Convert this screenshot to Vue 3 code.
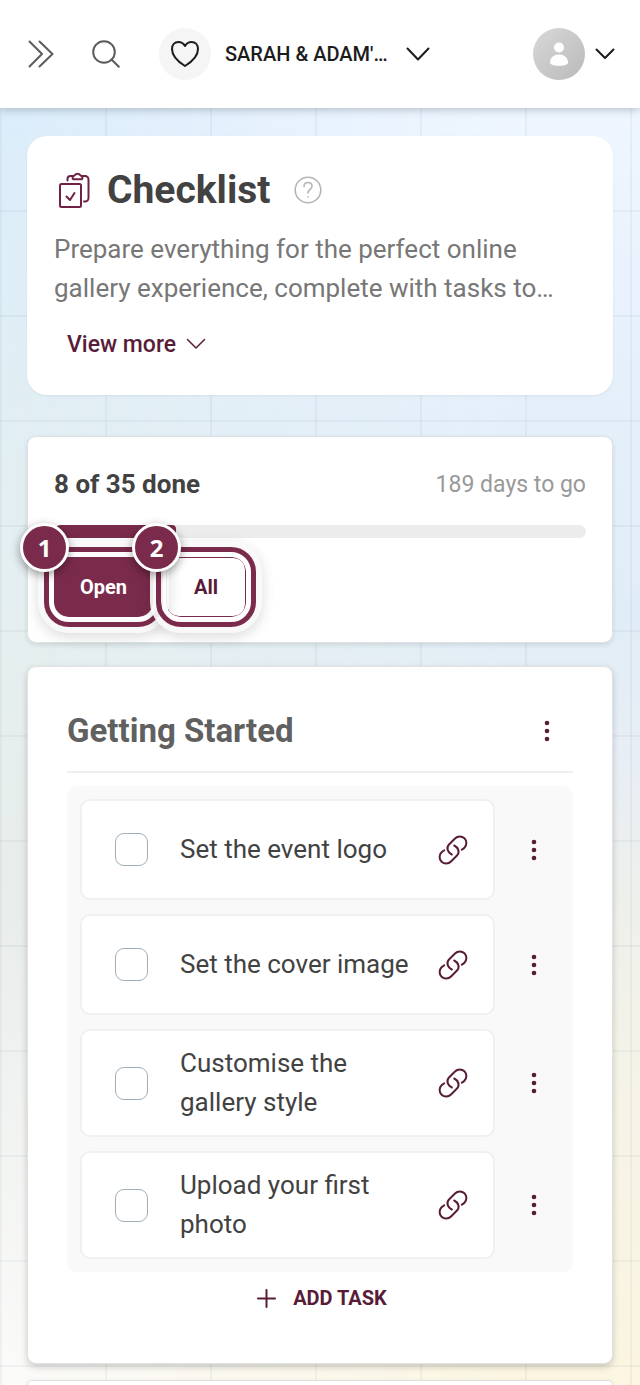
<script setup>
import { ref, computed } from 'vue'

const done = ref(8)
const total = ref(35)
const daysLeft = ref(189)
const filter = ref('open')

const tasks = ref([
  { id: 1, title: 'Set the event logo', checked: false },
  { id: 2, title: 'Set the cover image', checked: false },
  { id: 3, title: 'Customise the gallery style', checked: false },
  { id: 4, title: 'Upload your first photo', checked: false }
])

const filters = [
  { key: 'open', label: 'Open', step: 1 },
  { key: 'all', label: 'All', step: 2 }
]

const progress = computed(() => `${(done.value / total.value) * 100}%`)
</script>

<template>
  <div class="page">
    <header class="topbar">
      <button class="plain" type="button" aria-label="Open menu">
        <svg class="grey" width="26" height="28" viewBox="0 0 26 28">
          <path d="M1.500 1.500 14 14 1.500 26.500M11.500 1.500 24.500 14 11.500 26.500"/>
        </svg>
      </button>
      <button class="plain search" type="button" aria-label="Search">
        <svg class="grey" width="28" height="28" viewBox="0 0 28 28">
          <circle cx="12" cy="12" r="10.800"/>
          <path d="m19.500 19.500 7.300 7.300"/>
        </svg>
      </button>
      <button class="plain event" type="button">
        <span class="event-icon">
          <svg width="28" height="26" viewBox="0 0 28 26">
            <path d="M14 5C12 1.500 9.500 1 7.500 1 3.500 1 1 4 1 8c0 7 6.500 13 13 17 6.500-4 13-10 13-17 0-4-2.500-7-6.500-7-2 0-4.500.5-6.500 4z"/>
          </svg>
        </span>
        <span class="event-name">SARAH &amp; ADAM'…</span>
        <svg width="24" height="14" viewBox="0 0 24 14"><path d="m1.500 1.500 10.500 11 10.500-11"/></svg>
      </button>
      <button class="plain account" type="button" aria-label="Account">
        <span class="avatar">
          <svg width="20" height="25" viewBox="0 0 20 25">
            <circle cx="10" cy="5.500" r="5"/>
            <path d="M1 20.500C1 15.500 5 12.500 10 12.500s9 3 9 8c0 1.800-3 3.300-9 3.300s-9-1.500-9-3.300z"/>
          </svg>
        </span>
        <svg width="20" height="12" viewBox="0 0 20 12"><path d="m1.500 1.500 8.500 8.500 8.500-8.500"/></svg>
      </button>
    </header>

    <main class="content">
      <section class="card intro">
        <div class="intro-title">
          <svg class="clipboard" width="32" height="36" viewBox="0 0 32 36">
            <rect x="2" y="12" width="21" height="23" rx="1.500"/>
            <path d="m8.500 24.500 3.500 3.500 4.500-7"/>
            <path d="M9.500 8.500V7a3 3 0 0 1 3-3H15M24 4h3a3.500 3.500 0 0 1 3.500 3.500V26a3.500 3.500 0 0 1-3.500 3.500h-1"/>
            <path d="M14.500 6C14.500 4 16 3.600 17 3c.8-1.800 4.200-1.800 5 0 1 .6 2.500 1 2.500 3 0 .8-.5 1.300-1.200 1.300h-7.600c-.7 0-1.200-.5-1.200-1.300z"/>
          </svg>
          <h1>Checklist</h1>
          <button class="plain help" type="button" aria-label="Help">
            <svg width="28" height="28" viewBox="0 0 28 28">
              <circle cx="14" cy="14" r="12.800"/>
              <path d="M10 10.500c0-2.500 1.700-4 4-4s4 1.500 4 3.800c0 3.200-4 3.200-4 6.700M14 20.700v.3"/>
            </svg>
          </button>
        </div>
        <p>Prepare everything for the perfect online gallery experience, complete with tasks to…</p>
        <button class="plain more" type="button">
          View more
          <svg width="20" height="12" viewBox="0 0 20 12"><path d="m1.500 1.500 8.500 8.500 8.500-8.500"/></svg>
        </button>
      </section>

      <section class="card status">
        <div class="status-row">
          <strong>{{ done }} of {{ total }} done</strong>
          <span>{{ daysLeft }} days to go</span>
        </div>
        <div class="bar">
          <div class="bar-fill" :style="{ width: progress }"></div>
        </div>
        <div class="filters">
          <div v-for="item in filters" :key="item.key" class="filter">
            <button
                type="button"
                :class="{ active: filter === item.key }"
                @click="filter = item.key"
            >
              {{ item.label }}
            </button>
            <span class="ring"></span>
            <span class="badge">{{ item.step }}</span>
          </div>
        </div>
      </section>

      <section class="card group">
        <div class="group-head">
          <h2>Getting Started</h2>
          <button class="plain dots" type="button" aria-label="Group options">
            <svg width="6" height="22" viewBox="0 0 6 22">
              <circle cx="3" cy="3" r="2.300"/><circle cx="3" cy="11" r="2.300"/><circle cx="3" cy="19" r="2.300"/>
            </svg>
          </button>
        </div>
        <ul class="tasks">
          <li v-for="task in tasks" :key="task.id">
            <div class="task">
              <input :id="`task-${task.id}`" v-model="task.checked" type="checkbox">
              <label :for="`task-${task.id}`">{{ task.title }}</label>
              <a href="#" :aria-label="task.title">
                <svg width="30" height="30" viewBox="0 0 30 30">
                  <path d="M13.800 19.500C9.500 17.500 8 12.500 11 9.500l6-6c2.700-2.700 6.800-2.700 9.400-.2 2.700 2.700 2.600 6.900 0 9.500-.8.800-1.600 1.400-2.600 1.900"/>
                  <path d="M16.200 10.500c4.300 2 5.800 7 2.800 10l-6 6c-2.700 2.700-6.800 2.700-9.400.2-2.700-2.700-2.600-6.900 0-9.500.8-.8 1.600-1.400 2.600-1.900"/>
                </svg>
              </a>
            </div>
            <button class="plain dots" type="button" aria-label="Task options">
              <svg width="6" height="22" viewBox="0 0 6 22">
                <circle cx="3" cy="3" r="2.300"/><circle cx="3" cy="11" r="2.300"/><circle cx="3" cy="19" r="2.300"/>
              </svg>
            </button>
          </li>
        </ul>
        <button class="plain add" type="button">
          <svg width="19" height="19" viewBox="0 0 19 19"><path d="M9.500 1v17M1 9.500h17"/></svg>
          ADD TASK
        </button>
      </section>

      <section class="card next"></section>
    </main>
  </div>
</template>

<style>
body {
  margin: 0;
}
</style>

<style scoped>
* {
  box-sizing: border-box;
}

.page {
  position: relative;
  z-index: 0;
  display: flex;
  flex-direction: column;
  min-height: 100vh;
  font-family: Roboto, "Liberation Sans", sans-serif;
  color: #424242;
  background: linear-gradient(#dcedfb 8%, #e2eff3 32%, #e6efee 50%, #e9edeb 66%, #f3f5f3 85%, #fbfbfa);
}

.page::before,
.page::after {
  content: "";
  position: absolute;
  inset: 0;
  z-index: -1;
}

.page::before {
  background: linear-gradient(#eff6ff 8%, #e4effa 30%, #e1edf6 45%, #e8eef5 55%, #eef0eb 65%, #f6f4e7 80%, #fbf5e1);
  mask-image: linear-gradient(to right, transparent, #000 80%);
}

.page::after {
  background-image:
    linear-gradient(to right, transparent 103px, rgba(110, 130, 150, 0.08) 103px),
    linear-gradient(to bottom, transparent 103px, rgba(110, 130, 150, 0.08) 103px);
  background-size: 105px 105px;
  background-position: 2px 2px;
}

.plain {
  display: flex;
  align-items: center;
  padding: 0;
  border: 0;
  background: none;
  font: inherit;
  color: inherit;
  cursor: pointer;
}

svg {
  flex: none;
  fill: none;
  stroke: currentColor;
  stroke-width: 2;
  stroke-linecap: round;
  stroke-linejoin: round;
}

.topbar {
  display: flex;
  align-items: center;
  height: 108px;
  padding: 0 25px 0 28px;
  color: #1c1c1c;
  background: #fff;
  box-shadow: 0 2px 8px rgba(60, 75, 90, 0.3);
}

.grey {
  color: #5c5c5c;
}

.search {
  margin: 0 39px 0 38px;
}

.event-icon,
.avatar {
  display: flex;
  align-items: center;
  justify-content: center;
  width: 52px;
  height: 52px;
  border-radius: 50%;
  background: #f5f5f5;
}

.event-name {
  margin: 0 18px 0 14px;
  font-size: 20px;
  font-weight: 500;
  white-space: nowrap;
}

.account {
  gap: 10px;
  margin-left: auto;
}

.avatar {
  background: linear-gradient(135deg, #d8d8d8, #bababa);
}

.avatar svg {
  fill: #fff;
  stroke: none;
}

.content {
  display: flex;
  flex: 1;
  flex-direction: column;
  padding: 28px 27px 0;
}

.card {
  border: 1px solid #dfe1e3;
  border-radius: 9px;
  background: #fff;
  box-shadow: 0 2px 5px rgba(0, 0, 0, 0.1);
}

.intro {
  margin-bottom: 41px;
  padding: 28px 27px 26px;
  border: 0;
  border-radius: 20px;
  box-shadow: 0 1px 3px rgba(0, 0, 0, 0.06);
}

.intro-title {
  display: flex;
  align-items: center;
  height: 52px;
}

.clipboard {
  margin: 0 17px 0 4px;
  color: #6f2245;
}

h1,
h2,
p,
ul {
  margin: 0;
}

h1 {
  font-size: 39px;
  font-weight: 700;
}

.help {
  margin-left: 24px;
  color: #b5b5b5;
}

.help svg {
  stroke-width: 1.6;
}

.intro p {
  margin-top: 14px;
  font-size: 26px;
  line-height: 39px;
  color: #777;
}

.more {
  gap: 10px;
  height: 50px;
  margin-top: 11px;
  padding: 0 13px;
  font-size: 23px;
  font-weight: 500;
  color: #581c38;
}

.more svg {
  stroke-width: 1.5;
}

.status {
  margin-bottom: 23px;
  padding: 26px 26px 25px;
}

.status-row {
  display: flex;
  align-items: center;
  justify-content: space-between;
  height: 42px;
  font-size: 23px;
  color: #999;
}

.status-row strong {
  font-size: 26px;
  font-weight: 700;
  color: #424242;
}

.bar {
  height: 13px;
  margin: 20px 0 19px;
  overflow: hidden;
  border-radius: 7px;
  background: #ececec;
}

.bar-fill {
  height: 100%;
  border-radius: 4px;
  background: #7a2b4b;
}

.filters {
  display: flex;
  gap: 13px;
}

.filter {
  position: relative;
}

.filter button {
  min-width: 80px;
  height: 60px;
  padding: 0 25px;
  border: 1px solid #7a2b4b;
  border-radius: 13px;
  font: 700 20px Roboto, "Liberation Sans", sans-serif;
  color: #581c38;
  background: #fff;
}

.filter button.active {
  color: #fff;
  background: #7a2b4b;
}

/* tour highlight: lies over the neighbouring buttons */
.ring {
  position: absolute;
  inset: -10px;
  z-index: 1;
  border: 5px solid #7a2b4b;
  border-radius: 25px;
  box-shadow:
    inset 0 0 0 5px rgba(255, 255, 255, 0.9),
    0 0 0 6px rgba(250, 250, 250, 0.92),
    0 4px 14px 6px rgba(0, 0, 0, 0.14);
  pointer-events: none;
}

.badge {
  position: absolute;
  top: -34px;
  left: -34px;
  z-index: 2;
  display: flex;
  align-items: center;
  justify-content: center;
  width: 49px;
  height: 49px;
  border: 3px solid #fff;
  border-radius: 50%;
  font-family: "Noto Sans", sans-serif;
  font-size: 24px;
  line-height: 24px;
  font-weight: 700;
  color: #fff;
  background: #7a2b4b;
  box-shadow: 0 3px 10px rgba(0, 0, 0, 0.4);
}

.group {
  margin-bottom: 16px;
  padding: 39px;
  box-shadow: 0 3px 7px rgba(0, 0, 0, 0.18);
}

.group-head {
  display: flex;
  align-items: center;
  justify-content: space-between;
  padding-bottom: 15px;
  border-bottom: 2px solid #eee;
}

h2 {
  font-size: 33px;
  line-height: 50px;
  font-weight: 700;
  color: #606060;
}

.dots {
  justify-content: center;
  width: 52px;
  height: 50px;
  color: #581c38;
}

.dots svg {
  fill: currentColor;
  stroke: none;
}

.tasks {
  display: flex;
  flex-direction: column;
  gap: 14px;
  margin-top: 13px;
  padding: 13px;
  list-style: none;
  border-radius: 9px;
  background: #f9f9f9;
}

.tasks li {
  display: flex;
  align-items: center;
  gap: 13px;
}

.task {
  display: flex;
  flex: 1;
  align-items: center;
  min-height: 101px;
  padding: 13px 25px 13px 33px;
  border: 2px solid #f0f0f0;
  border-radius: 10px;
  background: #fff;
}

.task input {
  flex: none;
  width: 33px;
  height: 33px;
  margin: 0 32px 0 0;
  appearance: none;
  border: 1px solid #9fb0b9;
  border-radius: 9px;
  background: #fff;
}

.task input:checked {
  background: #7a2b4b;
}

.task label {
  flex: 1;
  margin-right: 25px;
  font-size: 26px;
  line-height: 39px;
}

.task a {
  display: flex;
  color: #581c38;
}

.add {
  gap: 17px;
  height: 52px;
  margin: 0 auto;
  padding-left: 4px;
  font-size: 20px;
  font-weight: 700;
  color: #581c38;
}

.next {
  flex: 1;
  border-bottom: 0;
  border-radius: 9px 9px 0 0;
}
</style>
